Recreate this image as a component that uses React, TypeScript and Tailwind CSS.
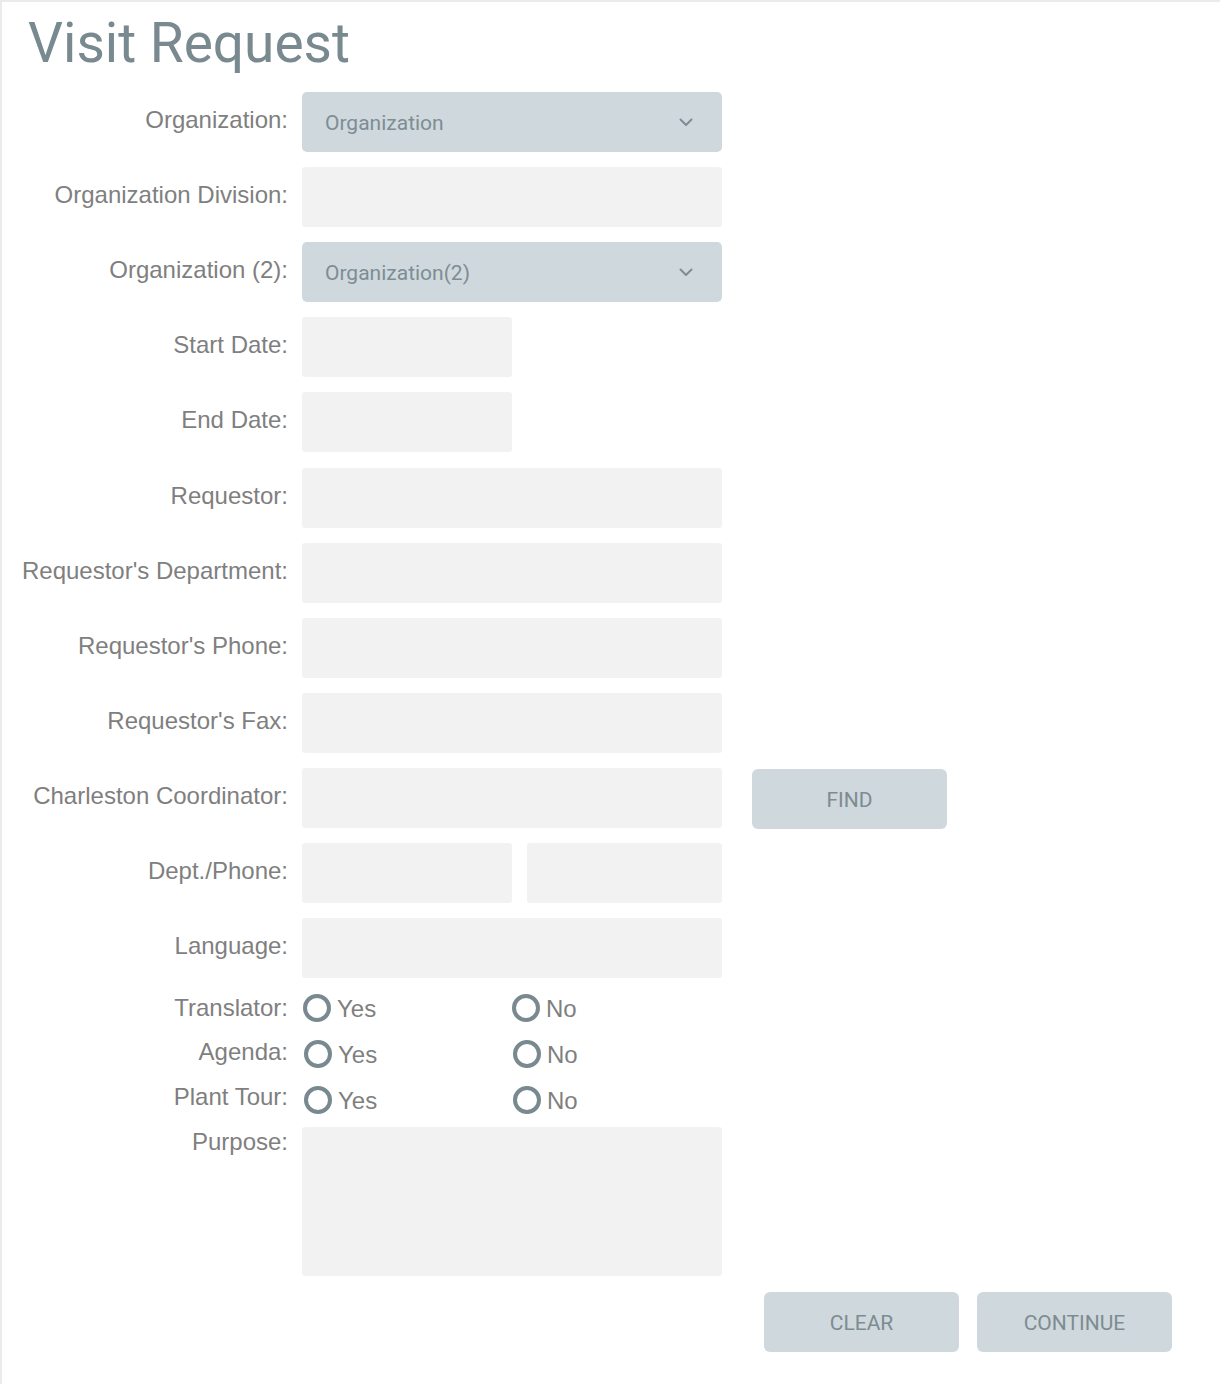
import React from "react";

const LABEL = "w-[286px] shrink-0 text-right text-[24px] leading-6 text-[#7f7f7f]";
const INPUT = "h-[60px] rounded-[3px] bg-[#f2f2f2]";

function Chevron() {
  return (
    <svg width="14" height="9" viewBox="0 0 14 9" fill="none">
      <path d="M1.5 1.5l5.5 5.5 5.5-5.5" stroke="#7d8d93" strokeWidth="2" strokeLinecap="round" strokeLinejoin="round" />
    </svg>
  );
}

function Row({ label, children, extra = "" }: { label: string; children: React.ReactNode; extra?: string }) {
  return (
    <div className={"flex items-start gap-[14px] " + extra}>
      <div className={LABEL + " pt-[16px]"}>{label}</div>
      {children}
    </div>
  );
}

function Select({ text }: { text: string }) {
  return (
    <div className="flex h-[60px] w-[420px] items-center justify-between rounded-[5px] bg-[#cfd8dd] pl-[23px] pr-[29px]">
      <span className="pt-[3px] font-['Roboto'] text-[21px] text-[#7d8d93]">{text}</span>
      <Chevron />
    </div>
  );
}

function Radio({ text, width }: { text: string; width: string }) {
  return (
    <div className={"flex items-center gap-[6px] " + width}>
      <span className="h-[28px] w-[28px] rounded-full border-[4px] border-[#78898f]" />
      <span className="pt-[2px] text-[24px] leading-6 text-[#7f7f7f]">{text}</span>
    </div>
  );
}

function RadioRow({ label, lift, pad }: { label: string; lift: string; pad: string }) {
  return (
    <div className="flex h-[46px] items-center gap-[14px]">
      <div className={LABEL + " " + lift}>{label}</div>
      <div className={"flex items-center " + pad}>
        <Radio text="Yes" width="w-[209px]" />
        <Radio text="No" width="w-[100px]" />
      </div>
    </div>
  );
}

function Button({ text }: { text: string }) {
  return (
    <div className="flex h-[60px] w-[195px] items-center justify-center rounded-[6px] bg-[#cfd8dd] pt-[3px] font-['Roboto'] text-[21px] text-[#7d8c91]">
      {text}
    </div>
  );
}

export default function App() {
  return (
    <div className="h-[1384px] w-[1220px] border-l-2 border-t-2 border-[#ebebeb] bg-white font-['Liberation_Sans',Arial,sans-serif]">
      <h1 className="ml-[26px] mt-[13px] font-['Roboto'] text-[55px] font-normal leading-[56px] text-[#78898f]">
        Visit Request
      </h1>
      <div className="mt-[21px] flex flex-col gap-[15px]">
        <Row label="Organization:">
          <Select text="Organization" />
        </Row>
        <Row label="Organization Division:">
          <div className={INPUT + " w-[420px]"} />
        </Row>
        <Row label="Organization (2):">
          <Select text="Organization(2)" />
        </Row>
        <Row label="Start Date:">
          <div className={INPUT + " w-[210px]"} />
        </Row>
        <Row label="End Date:">
          <div className={INPUT + " w-[210px]"} />
        </Row>
        <Row label="Requestor:" extra="mt-[1px]">
          <div className={INPUT + " w-[420px]"} />
        </Row>
        <Row label="Requestor's Department:">
          <div className={INPUT + " w-[420px]"} />
        </Row>
        <Row label="Requestor's Phone:">
          <div className={INPUT + " w-[420px]"} />
        </Row>
        <Row label="Requestor's Fax:">
          <div className={INPUT + " w-[420px]"} />
        </Row>
        <Row label="Charleston Coordinator:">
          <div className="flex items-start gap-[30px]">
            <div className={INPUT + " w-[420px]"} />
            <div className="mt-[1px] h-[59px]">
              <Button text="FIND" />
            </div>
          </div>
        </Row>
        <Row label="Dept./Phone:">
          <div className="flex gap-[15px]">
            <div className={INPUT + " w-[210px]"} />
            <div className={INPUT + " w-[195px]"} />
          </div>
        </Row>
        <Row label="Language:">
          <div className={INPUT + " w-[420px]"} />
        </Row>
      </div>
      <div className="mt-[7px] flex flex-col">
        <RadioRow label="Translator:" lift="" pad="pl-[1px]" />
        <RadioRow label="Agenda:" lift="-mt-[5px]" pad="pl-[2px]" />
        <RadioRow label="Plant Tour:" lift="-mt-[6px]" pad="pl-[2px]" />
      </div>
      <div className="mt-[4px] flex items-start gap-[14px]">
        <div className={LABEL + " pt-[3px]"}>Purpose:</div>
        <div className="h-[149px] w-[420px] rounded-[3px] bg-[#f2f2f2]" />
      </div>
      <div className="mt-[16px] flex justify-end gap-[18px] pr-[48px]">
        <Button text="CLEAR" />
        <Button text="CONTINUE" />
      </div>
    </div>
  );
}
